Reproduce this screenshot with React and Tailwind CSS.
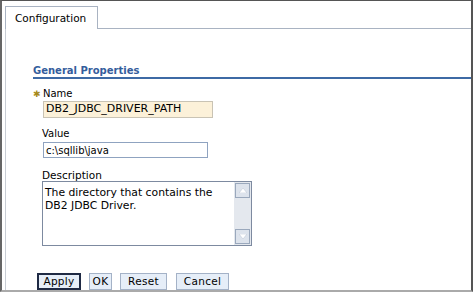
export default function App() {
  const font = { fontFamily: '"DejaVu Sans", Verdana, sans-serif' };
  return (
    <div className="w-[473px] h-[292px] bg-white border-t border-t-[#555] border-l-2 border-l-[#666] border-r-2 border-r-[#555] border-b-2 border-b-[#aaa] overflow-hidden" style={font}>
      <div className="pl-[3px] pt-[5px] flex flex-col">
        <div className="flex h-[23px] shrink-0">
          <div className="w-[93px] border border-b-0 border-[#a9b3c2] bg-white flex items-center pl-[9px] pt-[1px] text-[10.5px] text-black">
            Configuration
          </div>
          <div className="flex-1 border-b border-[#a9b3c2]"></div>
        </div>
        <div className="shrink-0 h-[262px] border-l border-[#c8cdd4] pl-[27px] pt-[36px]">
          <div className="border-b-2 border-[#3e6aa5]">
            <div className="text-[10px] font-bold text-[#345d9c] leading-[12px]">General Properties</div>
          </div>
          <div className="pt-[9px]">
            <div className="flex items-center h-[12px] text-[10px] leading-[12px]">
              <span className="text-[#a68a1a] text-[9px] w-[10px]">✱</span>
              <span>Name</span>
            </div>
            <div className="ml-[10px] mt-[1px] w-[170px] h-[17px] bg-[#fcf1d9] border border-[#c9c3b4] flex items-center pl-[2px] text-[11px] text-black">
              DB2_JDBC_DRIVER_PATH
            </div>
            <div className="ml-[9px] mt-[10px] h-[12px] text-[10px] leading-[12px]">Value</div>
            <div className="ml-[10px] mt-[2px] w-[165px] h-[16px] border border-[#8fa3c0] flex items-center pl-[2px] text-[10px] text-black">
              c:\sqllib\java
            </div>
            <div className="ml-[9px] mt-[11px] h-[12px] text-[10.5px] leading-[12px]">Description</div>
            <div className="ml-[9px] mt-[0px] w-[210px] h-[65px] border border-[#7d8aa0] flex">
              <div className="flex-1 pl-[2px] pt-[4px] text-[10.8px] leading-[13px] text-black">
                The directory that contains the<br />DB2 JDBC Driver.
              </div>
              <div className="w-[17px] bg-[#e4e8ee] flex flex-col justify-between p-[1px]">
                <div className="h-[15px] bg-[#dde3ec] border border-[#9aa8bc] flex items-center justify-center">
                  <svg width="8" height="5" viewBox="0 0 8 5"><path d="M0 5 L4 0 L8 5 Z" fill="#fff" stroke="#b9c3d3" strokeWidth="0.5" /></svg>
                </div>
                <div className="h-[15px] bg-[#dde3ec] border border-[#9aa8bc] flex items-center justify-center">
                  <svg width="8" height="5" viewBox="0 0 8 5"><path d="M0 0 L4 5 L8 0 Z" fill="#fff" stroke="#b9c3d3" strokeWidth="0.5" /></svg>
                </div>
              </div>
            </div>
            <div className="flex items-center mt-[27px] text-[10.5px] tracking-[0.3px] text-black">
              <button className="ml-[4px] w-[44px] h-[17px] border-2 border-[#1f2a44] bg-[#e6eef8] leading-none flex items-center justify-center">Apply</button>
              <button className="ml-[8px] w-[23px] h-[17px] border border-[#a4b2c7] bg-[#e6eef8] leading-none flex items-center justify-center">OK</button>
              <button className="ml-[8px] w-[47px] h-[17px] border border-[#a4b2c7] bg-[#e6eef8] leading-none flex items-center justify-center">Reset</button>
              <button className="ml-[9px] w-[53px] h-[17px] border border-[#a4b2c7] bg-[#e6eef8] leading-none flex items-center justify-center">Cancel</button>
            </div>
          </div>
        </div>
      </div>
    </div>
  );
}
